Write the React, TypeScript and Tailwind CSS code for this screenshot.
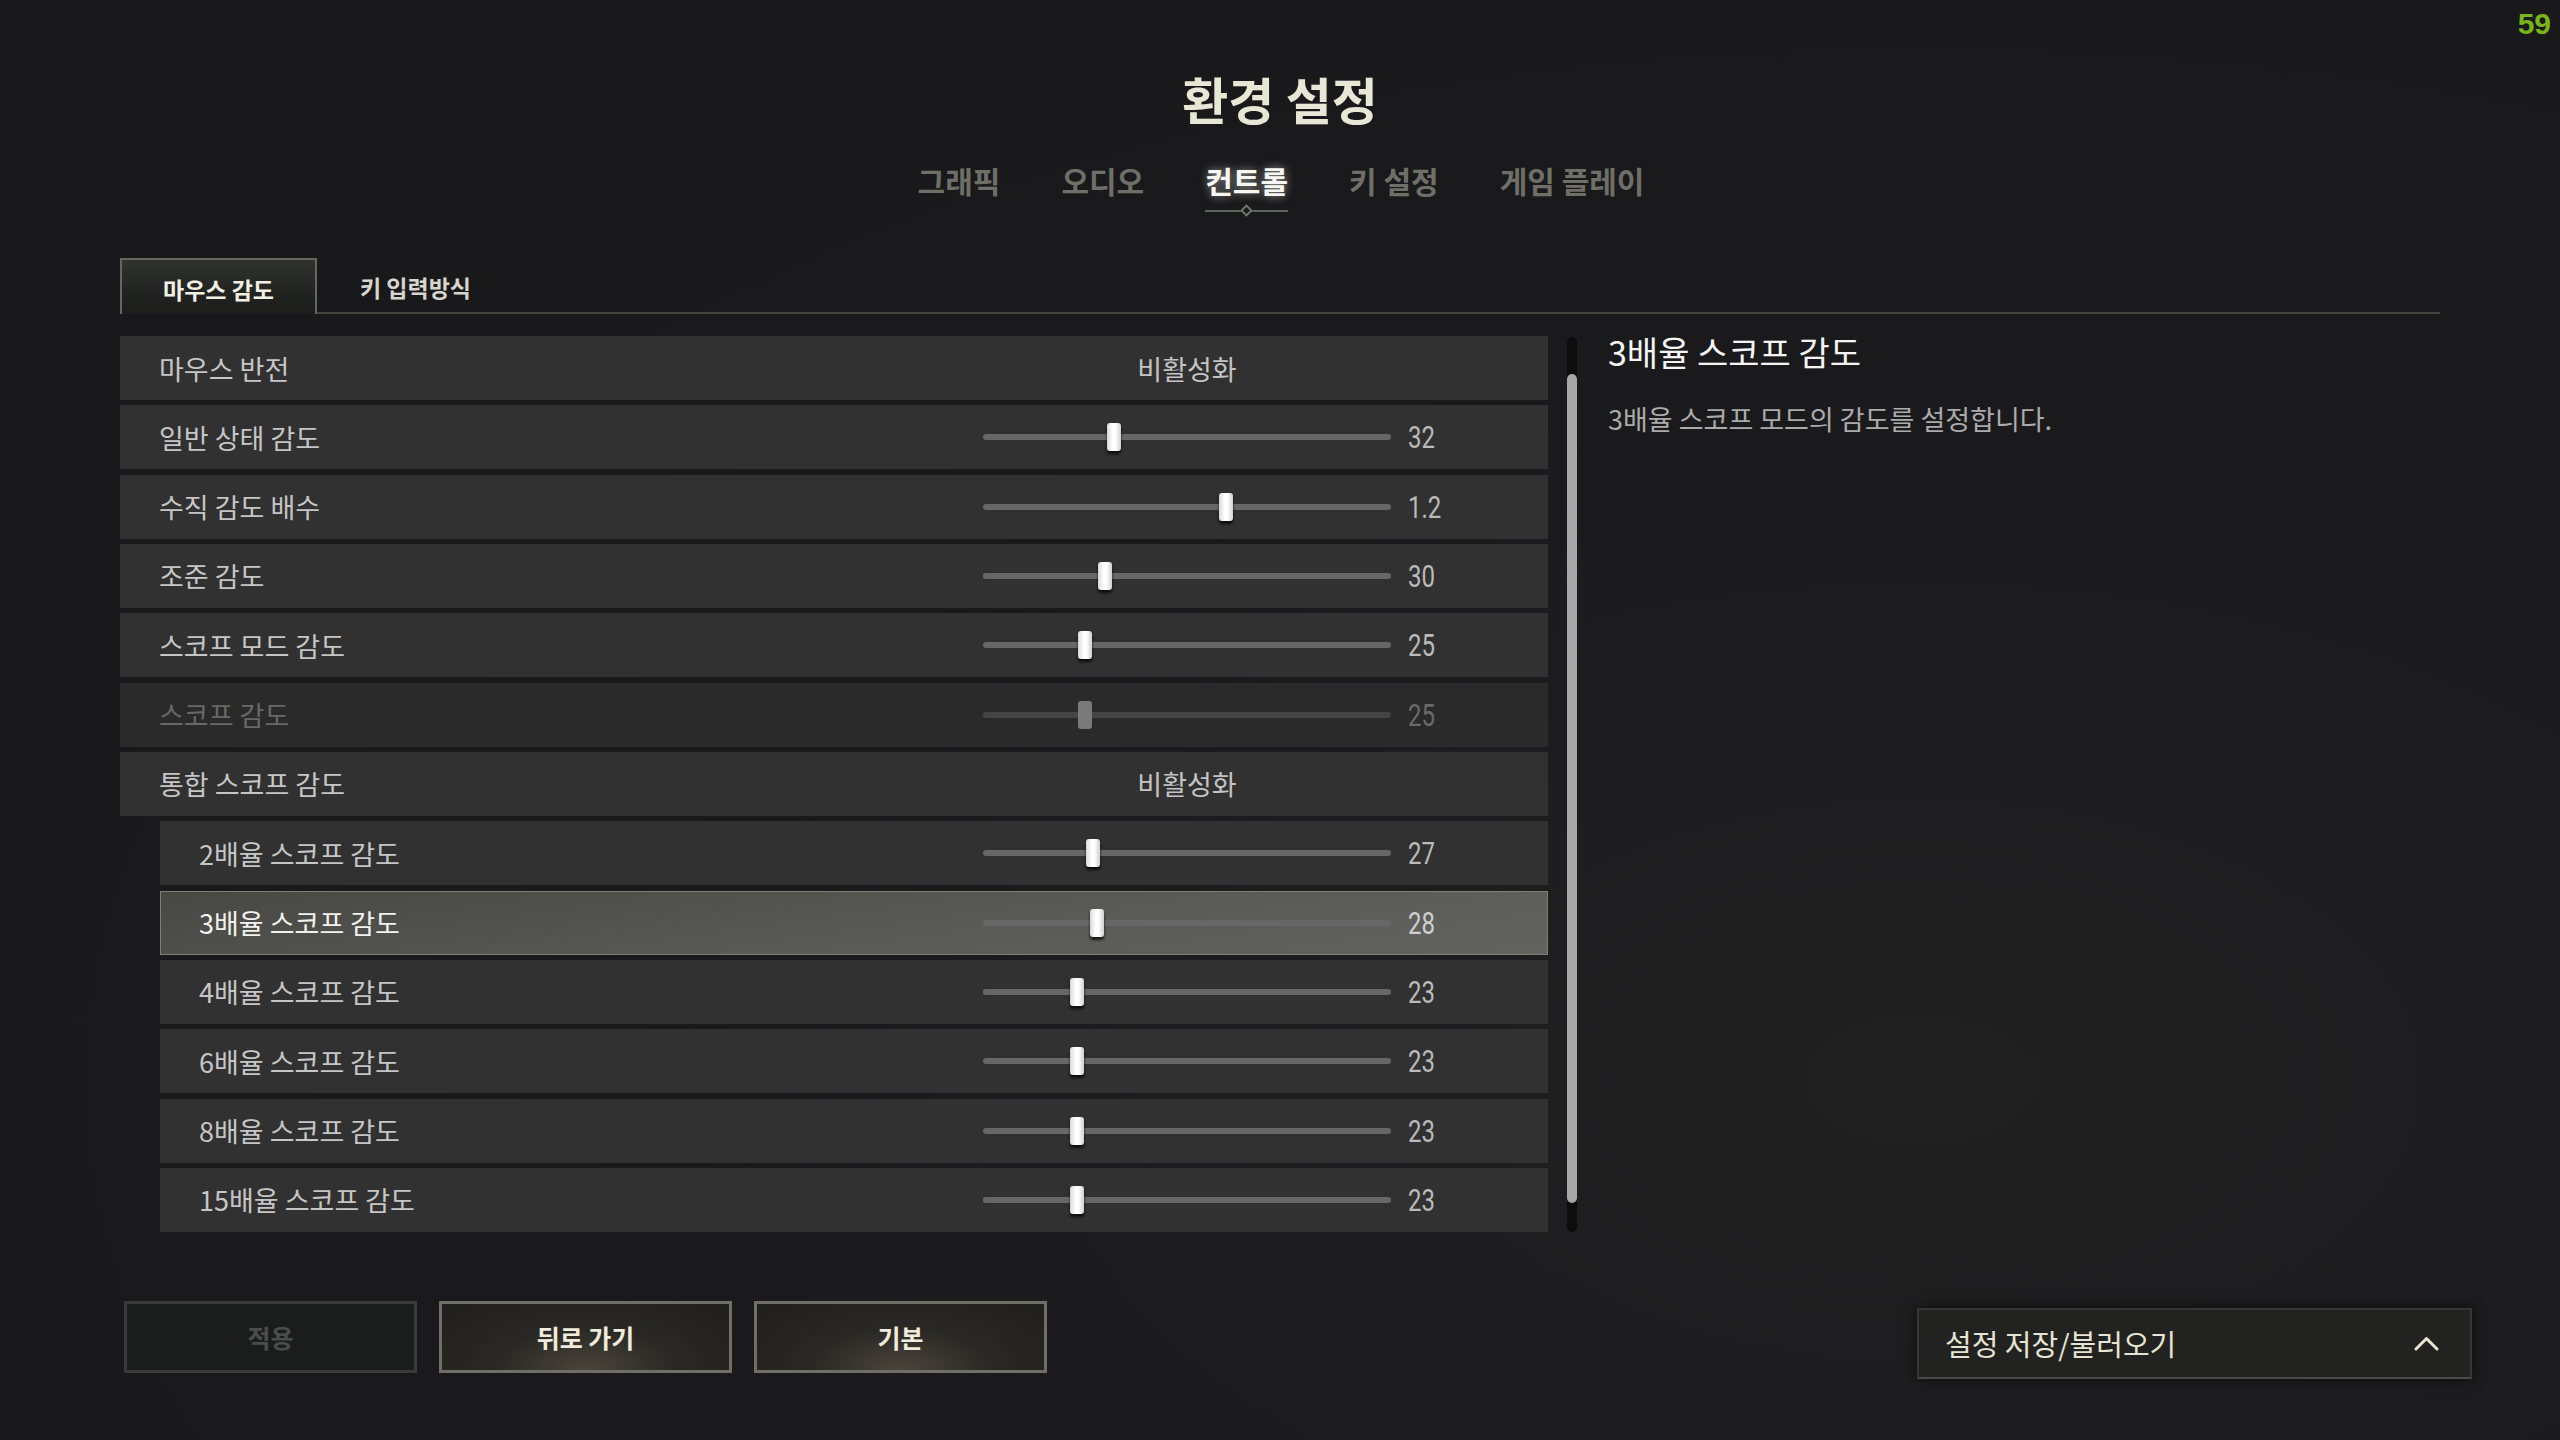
import React from 'react';

type Row = {
  label: string;
  kind: 'toggle' | 'slider';
  text: string;
  pct?: number;
  sub?: boolean;
  active?: boolean;
  disabled?: boolean;
};

const rows: Row[] = [
  { label: '마우스 반전', kind: 'toggle', text: '비활성화' },
  { label: '일반 상태 감도', kind: 'slider', text: '32', pct: 32 },
  { label: '수직 감도 배수', kind: 'slider', text: '1.2', pct: 59.5 },
  { label: '조준 감도', kind: 'slider', text: '30', pct: 30 },
  { label: '스코프 모드 감도', kind: 'slider', text: '25', pct: 25 },
  { label: '스코프 감도', kind: 'slider', text: '25', pct: 25, disabled: true },
  { label: '통합 스코프 감도', kind: 'toggle', text: '비활성화' },
  { label: '2배율 스코프 감도', kind: 'slider', text: '27', pct: 27, sub: true },
  { label: '3배율 스코프 감도', kind: 'slider', text: '28', pct: 28, sub: true, active: true },
  { label: '4배율 스코프 감도', kind: 'slider', text: '23', pct: 23, sub: true },
  { label: '6배율 스코프 감도', kind: 'slider', text: '23', pct: 23, sub: true },
  { label: '8배율 스코프 감도', kind: 'slider', text: '23', pct: 23, sub: true },
  { label: '15배율 스코프 감도', kind: 'slider', text: '23', pct: 23, sub: true },
];

function Slider({ pct, disabled }: { pct: number; disabled?: boolean }) {
  return (
    <div className={`relative h-[6px] w-[408px] rounded-full ${disabled ? 'bg-[#444444]' : 'bg-[#676767]'}`}>
      <div
        className={`absolute top-1/2 h-[28px] w-[14px] -translate-x-1/2 -translate-y-1/2 rounded-[3px] ${
          disabled
            ? 'bg-[#7a7a7a]'
            : 'bg-[linear-gradient(90deg,#d8d8d8_0%,#ffffff_40%,#ffffff_60%,#cfcfcf_100%)] shadow-[0_3px_3px_rgba(0,0,0,0.75)]'
        }`}
        style={{ left: `${pct}%` }}
      />
    </div>
  );
}

function SettingRow({ row }: { row: Row }) {
  const bg = row.active
    ? 'bg-[linear-gradient(172deg,#474743_0%,#5a5a56_60%,#63635f_100%)] shadow-[inset_0_0_0_1px_#7e7e75]'
    : row.disabled
    ? 'bg-[#2a2a2b]'
    : 'bg-[#313131]';
  const labelColor = row.active ? 'text-[#f2f2ee]' : row.disabled ? 'text-[#686868]' : 'text-[#c6c6c6]';
  const valueColor = row.disabled ? 'text-[#6a6a6a]' : row.active ? 'text-[#cfcfcf]' : 'text-[#bababa]';
  return (
    <div className={`flex h-[64px] shrink-0 items-center ${row.sub ? 'ml-[40px]' : ''} ${bg}`}>
      <div className={`flex-1 pl-[39px] text-[27px] leading-none ${labelColor}`}>{row.label}</div>
      <div className="flex w-[408px] items-center justify-center">
        {row.kind === 'toggle' ? (
          <span className="text-[27px] leading-none text-[#c4c4c4]">{row.text}</span>
        ) : (
          <Slider pct={row.pct ?? 0} disabled={row.disabled} />
        )}
      </div>
      <div className="w-[157px] pl-[17px]">
        {row.kind === 'slider' && (
          <span
            className={`inline-block origin-left scale-x-[0.75] font-['Roboto',sans-serif] text-[32px] leading-none ${valueColor}`}
          >
            {row.text}
          </span>
        )}
      </div>
    </div>
  );
}

function NavTabs() {
  const tabs = ['그래픽', '오디오', '컨트롤', '키 설정', '게임 플레이'];
  return (
    <div className="mt-[31px] flex justify-center gap-[61px] pl-[2px]">
      {tabs.map((t) => {
        const active = t === '컨트롤';
        return (
          <div key={t} className="relative">
            <span
              className={`block text-[30px] font-bold leading-[40px] ${
                active ? 'text-[#f6f6f2] [text-shadow:0_0_10px_rgba(255,255,255,0.55)]' : 'text-[#6f6f68]'
              }`}
            >
              {t}
            </span>
            {active && (
              <div className="absolute left-0 right-0 top-[46px] flex items-center">
                <div className="h-[2px] flex-1 bg-[#586658]" />
                <div className="h-[9px] w-[9px] rotate-45 border-2 border-[#6a7a6a] bg-[#19191b]" />
                <div className="h-[2px] flex-1 bg-[#586658]" />
              </div>
            )}
          </div>
        );
      })}
    </div>
  );
}

export default function App() {
  return (
    <div className="relative flex h-[1440px] w-[2560px] flex-col overflow-hidden bg-[#19191b] bg-[radial-gradient(ellipse_at_75%_75%,#202021_0%,#1a1a1c_45%,#18181a_100%)] font-['Noto_Sans_CJK_KR','Noto_Sans',sans-serif] text-white">
      <div className="absolute right-[9px] top-[9px] font-['Liberation_Sans',sans-serif] text-[30px] font-bold leading-none text-[#78b41a]">
        59
      </div>

      <h1 className="pt-[67px] text-center text-[50px] font-bold leading-[62px] text-[#e8e6d4]">환경 설정</h1>

      <NavTabs />

      <div className="ml-[120px] mt-[58px] flex w-[2320px] items-end border-b-2 border-[#45453f]">
        <div className="-mb-[2px] flex h-[56px] w-[197px] items-center justify-center border-2 border-b-0 border-[#66665c] bg-[linear-gradient(180deg,#2f332d_0%,#232522_55%,#1b1c1b_100%)] pt-[4px] text-[23px] font-bold leading-none text-[#f2f0e4]">
          마우스 감도
        </div>
        <div className="flex h-[54px] w-[197px] items-center justify-center pt-[4px] text-[23px] font-bold leading-none text-[#d6d6ce]">
          키 입력방식
        </div>
      </div>

      <div className="ml-[120px] mt-[22px] flex">
        <div className="flex w-[1428px] flex-col gap-[5.33px]">
          {rows.map((r) => (
            <SettingRow key={r.label} row={r} />
          ))}
        </div>
        <div className="ml-[19px] mt-[1px] flex h-[895px] w-[10px] flex-col rounded-full bg-[#0d0d0d] pb-[29px] pt-[37px]">
          <div className="flex-1 rounded-full bg-[#a7a7a7]" />
        </div>
        <div className="ml-[31px] flex flex-col">
          <div className="text-[34px] leading-[32px] text-[#f4f4f4]">3배율 스코프 감도</div>
          <div className="mt-[35px] text-[27px] leading-[32px] text-[#ababab]">3배율 스코프 모드의 감도를 설정합니다.</div>
        </div>
      </div>

      <div className="ml-[120px] mt-[69px] flex w-[2352px] items-start justify-between">
        <div className="ml-[4px] flex gap-[22px]">
          <div className="flex h-[72px] w-[293px] items-center justify-center border-[3px] border-[#393b3b] bg-[#1b1d1d] text-[25px] font-bold leading-none text-[#4b4d4d]">
            적용
          </div>
          <div className="flex h-[72px] w-[293px] items-center justify-center border-[3px] border-[#6f6f68] bg-[radial-gradient(ellipse_at_50%_100%,#4a453c_0%,#2a2824_45%,#1f1f1d_100%)] text-[25px] font-bold leading-none text-[#efecdc]">
            뒤로 가기
          </div>
          <div className="flex h-[72px] w-[293px] items-center justify-center border-[3px] border-[#6f6f68] bg-[radial-gradient(ellipse_at_50%_100%,#4a453c_0%,#2a2824_45%,#1f1f1d_100%)] text-[25px] font-bold leading-none text-[#efecdc]">
            기본
          </div>
        </div>
        <div className="mt-[7px] flex h-[71px] w-[555px] items-center justify-between border-2 border-[#363634] border-b-[#4a4a46] bg-[#222220] pl-[26px] pr-[31px] shadow-[0_0_12px_rgba(0,0,0,0.6)]">
          <span className="text-[29px] leading-none text-[#e6e4d2]">설정 저장/불러오기</span>
          <svg width="25" height="15" viewBox="0 0 25 15" fill="none">
            <path d="M2 13 L12.5 2.5 L23 13" stroke="#e6e4d2" strokeWidth="3" strokeLinecap="round" strokeLinejoin="round" />
          </svg>
        </div>
      </div>
    </div>
  );
}
